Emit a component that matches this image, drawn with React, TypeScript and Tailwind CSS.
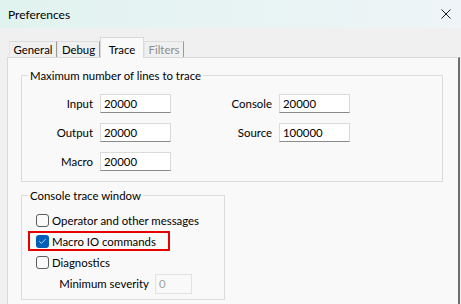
import { Check } from "lucide-react";

const font = "font-['Lato','Liberation_Sans',sans-serif] text-[11.4px] leading-[15px]";

function TextBox({ value, disabled = false, width = "w-[71px]" }: { value: string; disabled?: boolean; width?: string }) {
  return (
    <div
      className={`${width} h-[19px] flex items-center pl-[3px] border ${
        disabled
          ? "bg-[#f9f9f9] border-[#e2e2e2] text-[#a3a3a3] h-[20px]"
          : "bg-white border-[#dadada] border-b-[#8a8a8a] text-black"
      }`}
    >
      {value}
    </div>
  );
}

function CheckBox({ checked = false }: { checked?: boolean }) {
  if (checked) {
    return (
      <span className="w-[13px] h-[13px] rounded-[3px] bg-[#005fb8] flex items-center justify-center shrink-0">
        <Check size={9} strokeWidth={2} className="text-white" />
      </span>
    );
  }
  return <span className="w-[13px] h-[13px] rounded-[3px] border border-[#5d5d5d] bg-[#fafafa] shrink-0" />;
}

export default function App() {
  const tabs = [
    { name: "General", w: "w-[48px]" },
    { name: "Debug", w: "w-[43px]" },
    { name: "Trace", w: "w-[44px]", active: true },
    { name: "Filters", w: "w-[40px]", disabled: true },
  ];

  return (
    <div className={`w-[461px] h-[304px] overflow-hidden bg-[#f0f0f0] flex flex-col text-black ${font}`}>
      {/* Title bar */}
      <div className="h-[28px] shrink-0 flex items-center justify-between pl-[8px] pr-[6px] bg-linear-to-r from-[#e1f3ef] to-[#eef4f7]">
        <span className="text-[12px]">Preferences</span>
        <svg width="10" height="10" viewBox="0 0 10 10" className="mr-[4px]">
          <path d="M0.5 0.5 L9.5 9.5 M9.5 0.5 L0.5 9.5" stroke="#1b1b1b" strokeWidth="1" />
        </svg>
      </div>

      {/* Tabs */}
      <div className="h-[29px] shrink-0 flex items-end pl-[9px] relative z-10">
        {tabs.map((t) =>
          t.active ? (
            <div
              key={t.name}
              className={`${t.w} h-[21px] -mb-px bg-[#f9f9f9] border-t border-l border-r border-[#d9d9d9] flex justify-center pt-[4px]`}
            >
              {t.name}
            </div>
          ) : (
            <div
              key={t.name}
              className={`${t.w} h-[16px] border-t border-l border-t-[#dcdcdc] border-l-[#e6e6e6] border-r border-r-[#9a9a9a] flex items-center justify-center ${
                t.disabled ? "text-[#8c8c8c]" : ""
              }`}
            >
              {t.name}
            </div>
          )
        )}
      </div>

      {/* Tab panel */}
      <div className="ml-[7px] w-[453px] flex-1 bg-[#f9f9f9] border-t border-l border-[#d9d9d9] border-r-2 border-r-[#6e6e6e] pt-[10px]">
        <fieldset className="ml-[13px] w-[422px] border border-[#dcdcdc] pt-[11px] pb-[10px]">
          <legend className="ml-[6px] px-[2px]">Maximum number of lines to trace</legend>
          <div className="grid grid-cols-[71px_71px_94px_71px] gap-x-[7px] gap-y-[10px] items-center">
            <span className="text-right">Input</span>
            <TextBox value="20000" />
            <span className="text-right">Console</span>
            <TextBox value="20000" />
            <span className="text-right">Output</span>
            <TextBox value="20000" />
            <span className="text-right">Source</span>
            <TextBox value="100000" />
            <span className="text-right">Macro</span>
            <TextBox value="20000" />
          </div>
        </fieldset>

        <fieldset className="ml-[13px] mt-[6px] w-[204px] border border-[#dcdcdc] pt-[7px] pb-[5px]">
          <legend className="ml-[6px] px-[2px]">Console trace window</legend>
          <div className="h-[21px] flex items-center gap-[3px] pl-[14px]">
            <CheckBox />
            <span>Operator and other messages</span>
          </div>
          <div className="h-[21px] flex items-center gap-[3px] pl-[14px] relative">
            <CheckBox checked />
            <span>Macro IO commands</span>
            <span className="absolute left-[6px] top-0 w-[142px] h-[20px] border-2 border-[#e60000]" />
          </div>
          <div className="h-[21px] flex items-center gap-[3px] pl-[14px]">
            <CheckBox />
            <span>Diagnostics</span>
          </div>
          <div className="h-[21px] flex items-center gap-[6px]">
            <span className="w-[127px] text-right whitespace-nowrap">Minimum severity</span>
            <TextBox value="0" disabled width="w-[37px]" />
          </div>
        </fieldset>
      </div>
    </div>
  );
}
